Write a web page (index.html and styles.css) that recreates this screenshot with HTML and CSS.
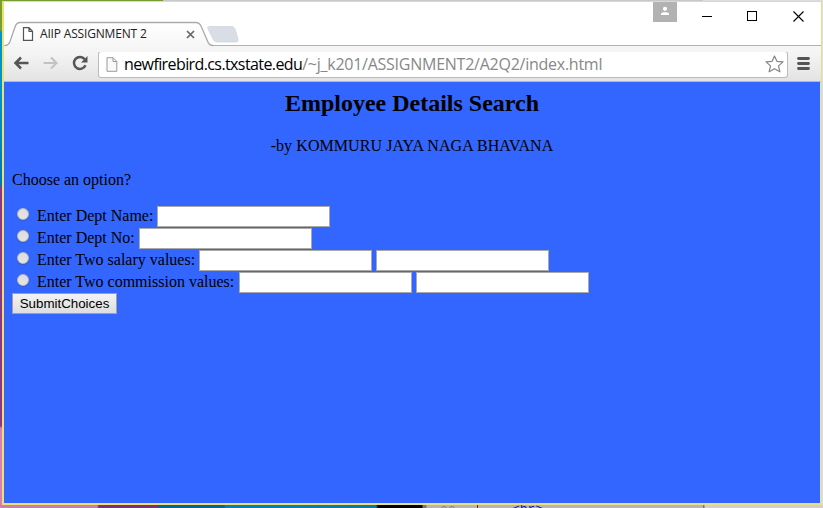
FILE: index.html
```html
<!DOCTYPE html>
<html lang="en">
<head>
<meta charset="utf-8">
<title>AIIP ASSIGNMENT 2</title>
<link rel="stylesheet" href="styles.css">
</head>
<body>
<div class="desktop">
  <div class="strip strip-left"></div>
  <div class="strip strip-bottom"><span class="line-no">33</span><span class="margin-rule"></span><span class="code">&lt;br&gt;</span></div>
  <div class="window">
    <header class="titlebar">
      <svg class="tabs" width="250" height="26" viewBox="0 0 250 26">
        <defs>
          <linearGradient id="tabfill" x1="0" y1="0" x2="0" y2="1"><stop offset="0" stop-color="#fff"/><stop offset="1" stop-color="#f6f6f6"/></linearGradient>
        </defs>
        <path d="M0 24.500C3 24.500 4 23 5 20.500L10 6C11 3 12 1.500 15 1.500H191C194 1.500 195 3 196 5L202.500 20C203.500 23 205 24.500 208 24.500V26H0Z" fill="url(#tabfill)"/>
        <path d="M0 24.500C3 24.500 4 23 5 20.500L10 6C11 3 12 1.500 15 1.500H191C194 1.500 195 3 196 5L202.500 20C203.500 23 205 24.500 208 24.500" fill="none" stroke="#aaa" stroke-width="1.300"/>
        <path d="M205 5.500H226C228 5.500 229 6 230 8L233 18C233.500 20 233 21 231 21H212C210 21 209 20 208 18L203 8C202 6 203 5.500 205 5.500Z" fill="#d9dee6" stroke="#cfd3da" stroke-width=".7"/>
      </svg>
      <div class="tab">
        <svg width="12" height="14" viewBox="0 0 12 14"><path d="M1.500 .7H7L10.500 4.200V13.300H1.500ZM7 .7V4.300H10.500" fill="#fff" stroke="#555" stroke-width="1.200"/></svg>
        <span class="tab-title">AIIP ASSIGNMENT 2</span>
        <svg class="tab-close" width="9" height="9" viewBox="0 0 9 9"><path d="M1 1L8 8M8 1L1 8" stroke="#666" stroke-width="1.700"/></svg>
      </div>
      <div class="controls">
        <span class="user"><svg width="10" height="10" viewBox="0 0 10 10"><circle cx="5" cy="2.800" r="2.100" fill="#fff"/><path d="M1 9V7.500C2 5.800 8 5.800 9 7.500V9Z" fill="#fff"/></svg></span>
        <svg class="minimize" width="10" height="11" viewBox="0 0 10 11"><path d="M0 5.500H10" stroke="#000"/></svg>
        <svg class="maximize" width="10" height="11" viewBox="0 0 10 11"><rect x=".5" y=".5" width="9" height="9" fill="none" stroke="#000"/></svg>
        <svg class="close" width="11" height="11" viewBox="0 0 11 11"><path d="M.5 .5L10.500 10.500M10.500 .5L.5 10.500" stroke="#000" stroke-width="1.100"/></svg>
      </div>
    </header>
    <div class="toolbar">
      <svg class="back" width="16" height="14" viewBox="0 0 16 14"><path d="M15.500 7H2.500M8 1.500L2.500 7L8 12.500" fill="none" stroke="#555" stroke-width="2.500"/></svg>
      <svg class="forward" width="16" height="14" viewBox="0 0 16 14"><path d="M.5 7H13.500M8 1.500L13.500 7L8 12.500" fill="none" stroke="#c2c2c2" stroke-width="2.100"/></svg>
      <svg class="reload" width="16" height="16" viewBox="0 0 16 16"><path d="M12.700 4.200A6 6 0 1 0 13.500 10.300" fill="none" stroke="#555" stroke-width="2.500"/><path d="M15.500 1V7.500H9Z" fill="#555"/></svg>
      <div class="address">
        <svg width="12" height="15" viewBox="0 0 12 15"><path d="M1 .7H7L10.800 4.500V14.300H1ZM7 .7V4.500H10.800" fill="#fafafa" stroke="#999"/></svg>
        <span class="url"><b>newfirebird.cs.txstate.edu</b>/~j_k201/ASSIGNMENT2/A2Q2/index.html</span>
        <svg class="star" width="19" height="18" viewBox="0 0 19 18"><path d="M9.500 1L11.900 6.300L18 6.900L13.500 10.900L14.900 16.800L9.500 13.800L4.100 16.800L5.500 10.900L1 6.900L7.100 6.300Z" fill="#fff" stroke="#858585" stroke-width="1.200" stroke-linejoin="round"/></svg>
      </div>
      <svg class="menu" width="13" height="13" viewBox="0 0 13 13"><path d="M1.500 1.500H11.500M1.500 6.500H11.500M1.500 11.500H11.500" stroke="#555" stroke-width="2.800" stroke-linecap="round"/></svg>
    </div>
    <main class="page">
      <h2>Employee Details Search</h2>
      <p class="author">-by KOMMURU JAYA NAGA BHAVANA</p>
      <p class="prompt">Choose an option?</p>
      <form>
        <div class="row"><span class="radio"></span><label>Enter Dept Name:</label><input type="text"></div>
        <div class="row"><span class="radio"></span><label>Enter Dept No:</label><input type="text"></div>
        <div class="row"><span class="radio"></span><label>Enter Two salary values:</label><input type="text"><input type="text"></div>
        <div class="row"><span class="radio"></span><label class="wide">Enter Two commission values:</label><input type="text"><input type="text"></div>
        <button type="button">SubmitChoices</button>
      </form>
    </main>
  </div>
</div>
</body>
</html>
```
FILE: styles.css
```css
* { box-sizing: border-box; }
body { margin: 0; overflow: hidden; }
svg { display: block; flex: none; }
.desktop {
  width: 823px; height: 508px;
  display: grid;
  grid-template: 1px 504px 3px / 2px 820px 1px;
  background: linear-gradient(90deg, #779f30 0 163px, #c8c8c8 163px 703px, #ddd 703px);
}
.strip-left {
  grid-row: 1 / 4; grid-column: 1;
  background: linear-gradient(#779f30 0 30px, #0093cc 32px 100px, #0078b4 185px, #8b3787 187px 426px, #d580b5 428px);
}
.strip-bottom {
  grid-row: 3; grid-column: 1 / 4;
  display: flex; overflow: hidden;
  background: linear-gradient(90deg, #c97fa7 0 97px, #812f75 99px 157px, #00679c 159px 224px, #0083b4 226px 290px, #0878a5 376px, #000 378px 422px, #777 423px 426px, #b5b5b5 427px 703px, #777 703px 704px, #d0d0d0 705px);
  font: 13px/13px "Liberation Mono", monospace;
}
.line-no { margin-left: 440px; width: 37px; color: #888; }
.margin-rule { width: 1px; background: #b00; }
.code { margin-left: 34px; color: #1515b5; margin-top: -2px; }
.window {
  grid-row: 2; grid-column: 2;
  display: flex; flex-direction: column;
  border: solid #f0df75; border-width: 1px 1px 2px 2px;
  background: #fff;
}
.titlebar { height: 50px; display: flex; position: relative; }
.tabs { position: absolute; left: 1px; top: 19px; z-index: 1; }
.titlebar::after { content: ""; position: absolute; left: 0; right: 0; bottom: 6px; height: 1px; background: #b2b2b2; }
.titlebar::before { content: ""; position: absolute; left: 0; right: 0; bottom: 0; height: 6px; background: #f5f5f5; }
.tab { position: relative; z-index: 2; display: flex; align-items: center; margin: 25px 0 0 18px; width: 173px; height: 14px; }
.tab-title { margin-left: 6px; font: 12px/14px "Open Sans", "Noto Sans", sans-serif; letter-spacing: -.17px; white-space: nowrap; color: #222; }
.tab-close { margin-left: auto; }
.controls { display: flex; margin-left: auto; }
.user { width: 24px; height: 20px; display: flex; justify-content: center; padding-top: 4px; background: #b2b2b2; }
.minimize { margin: 9px 0 0 25px; }
.maximize { margin: 9px 0 0 35px; }
.close { margin: 9px 17px 0 36px; }
.toolbar {
  height: 30px; display: flex; align-items: center;
  padding: 0 11px 5px 9px;
  background: linear-gradient(#f5f5f5, #e3e3e3);
  border-bottom: 1px solid #b5b9c0;
}
.back { margin-top: -2px; }
.forward { margin: -2px 0 0 14px; }
.reload { margin: -2px 0 0 13px; }
.address {
  display: flex; align-items: center;
  width: 690px; height: 27px; margin-left: 10px; padding: 0 3px 0 7px;
  background: #fff; border: 1px solid #bbb; border-top-color: #a5a5a5; border-radius: 3px;
}
.url { margin-left: 6px; font: 16px/22px "Open Sans", "Noto Sans", sans-serif; letter-spacing: -.25px; color: #888; white-space: nowrap; }
.url b { font-weight: 400; color: #000; letter-spacing: -.6px; }
.star { margin-left: auto; }
.menu { margin: -2px 0 0 9px; }
.page {
  flex: 1; padding: 8px; margin-right: 1px;
  background: #36f; color: #000;
  font: 16px/18px "Liberation Serif", "Times New Roman", serif;
  box-shadow: 1px 0 #d9dfe8;
}
h2 { margin: 0 0 20px; font-size: 24px; line-height: 27px; text-align: center; }
p { margin: 0 0 16px; }
.author { text-align: center; letter-spacing: .07px; }
.prompt { margin-bottom: 17px; }
.row { display: flex; align-items: flex-start; height: 22px; }
.radio {
  width: 12px; height: 12px; margin: 2px 8px 0 5px; border-radius: 50%;
  background: linear-gradient(#ddd, #e5e5e5); border: 1px solid #b8b8b8;
  box-shadow: 0 1px 1px #315ac0;
}
label { line-height: 20px; margin-right: 4px; white-space: nowrap; }
.wide { margin-right: 5px; }
input { width: 173px; height: 21px; margin: 0 4px 0 0; padding: 1px; border: 1px solid #a9a9a9; background: #fff; }
button {
  display: block; width: 105px; height: 21px; margin-top: -1px; padding: 0;
  border: 1px solid #a0a0a0; border-radius: 0;
  background: linear-gradient(#f3f3f3, #ddd);
  font: 13.33px/18px "Liberation Sans", Arial, sans-serif; color: #000;
}
```
